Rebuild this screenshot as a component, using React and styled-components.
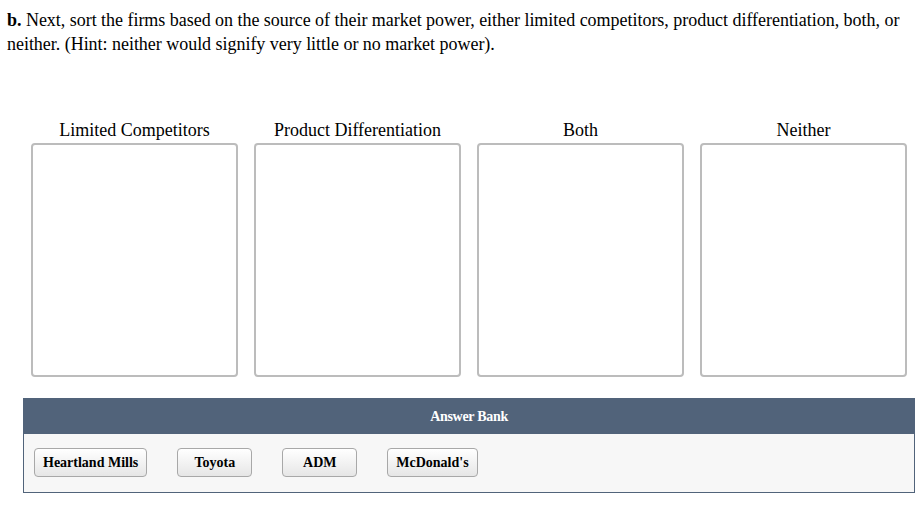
import React from 'react';
import styled, { createGlobalStyle } from 'styled-components';

const GlobalStyle = createGlobalStyle`
  html, body {
    margin: 0;
    padding: 0;
    background: #fff;
  }
  body {
    font-family: "Liberation Serif", "Times New Roman", serif;
    color: #000;
  }
`;

const Page = styled.div`
  width: 921px;
  padding-top: 8px;
`;

const Prompt = styled.p`
  margin: 0;
  padding: 0 6px 0 7px;
  font-size: 18px;
  line-height: 24px;
  letter-spacing: -0.03px;
`;

const Activity = styled.div`
  margin: 64px 6px 0 23px;
`;

const Columns = styled.div`
  display: grid;
  grid-template-columns: repeat(4, 207px);
  column-gap: 16px;
  padding: 0 8px;
`;

const Column = styled.div`
  display: flex;
  flex-direction: column;
  align-items: stretch;
`;

const Label = styled.div`
  font-size: 18px;
  line-height: 20px;
  text-align: center;
  margin-bottom: 3px;
`;

const DropZone = styled.div`
  height: 234px;
  box-sizing: border-box;
  border: 2px solid #bcbcbc;
  border-radius: 4px;
  background: #fff;
`;

const Bank = styled.div`
  margin-top: 21px;
  border: 1px solid #51637a;
  border-top: none;
`;

const BankHeader = styled.div`
  height: 36px;
  background: #51637a;
  color: #fff;
  font-weight: bold;
  font-size: 14px;
  letter-spacing: -0.3px;
  display: flex;
  align-items: center;
  justify-content: center;
  padding-top: 1px;
  box-sizing: border-box;
`;

const BankBody = styled.div`
  background: #f7f7f7;
  display: flex;
  align-items: center;
  gap: 30px;
  padding: 14px 10px 15px;
`;

const Chip = styled.div`
  height: 29px;
  box-sizing: border-box;
  min-width: ${({ $min }) => $min || 0}px;
  padding: 0 8px;
  display: flex;
  align-items: center;
  justify-content: center;
  font-size: 14px;
  font-weight: bold;
  border: 1px solid #a8a8a8;
  border-radius: 4px;
  background: linear-gradient(#ffffff, #e6e6e6);
`;

const categories = ['Limited Competitors', 'Product Differentiation', 'Both', 'Neither'];
const firms = ['Heartland Mills', 'Toyota', 'ADM', "McDonald's"];

export default function App() {
  return (
    <Page>
      <GlobalStyle />
      <Prompt>
        <b>b.</b> Next, sort the firms based on the source of their market power, either limited
        competitors, product differentiation, both, or neither. (Hint: neither would signify very
        little or no market power).
      </Prompt>
      <Activity>
        <Columns>
          {categories.map((c) => (
            <Column key={c}>
              <Label>{c}</Label>
              <DropZone />
            </Column>
          ))}
        </Columns>
        <Bank>
          <BankHeader>Answer Bank</BankHeader>
          <BankBody>
            {firms.map((f) => (
              <Chip key={f} $min={75}>{f}</Chip>
            ))}
          </BankBody>
        </Bank>
      </Activity>
    </Page>
  );
}
